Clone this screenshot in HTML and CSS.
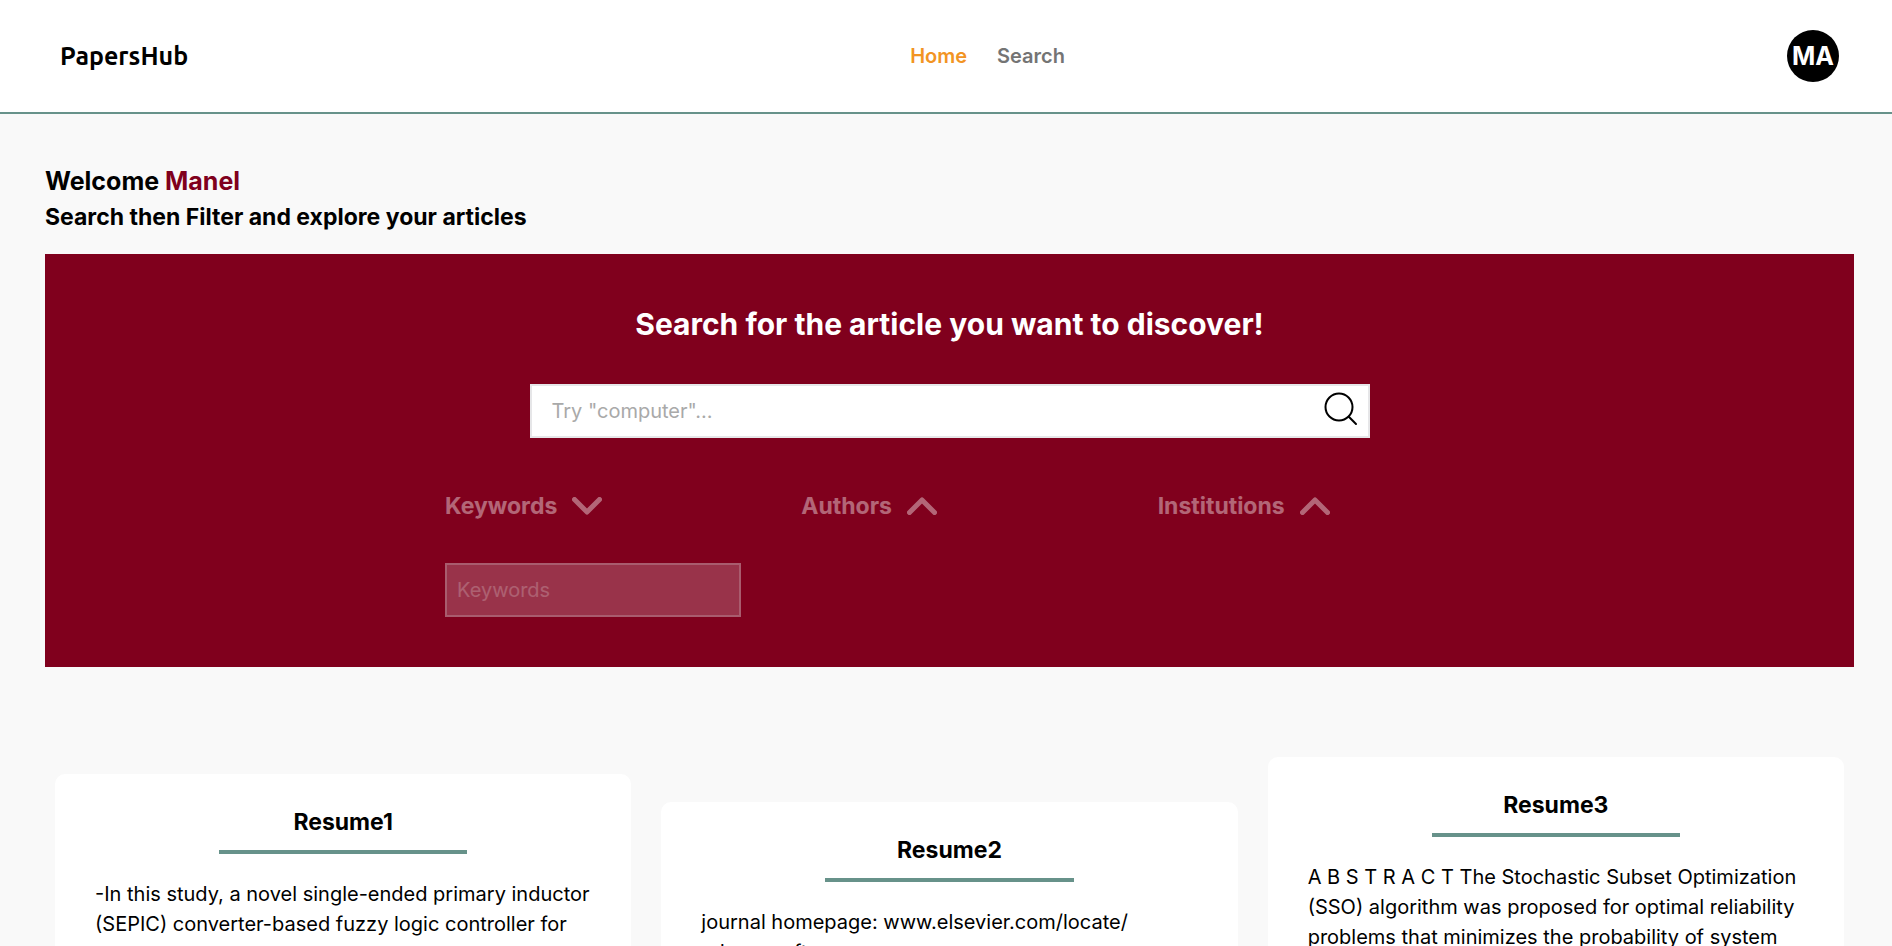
FILE: index.html
```html
<!DOCTYPE html>
<html lang="en">
<head>
  <meta charset="utf-8">
  <title>PapersHub</title>
  <link rel="stylesheet" href="styles.css">
</head>
<body>
  <header class="navbar">
    <a class="logo" href="#">PapersHub</a>
    <nav class="nav-links">
      <a class="active" href="#">Home</a>
      <a href="#search">Search</a>
    </nav>
    <button class="avatar" type="button">MA</button>
  </header>

  <main class="page">
    <h1 class="welcome">Welcome <span>Manel</span></h1>
    <h2 class="subtitle">Search then Filter and explore your articles</h2>

    <form class="search-box" id="search">
      <h2 class="search-title">Search for the article you want to discover!</h2>

      <div class="search-bar">
        <input type="text" aria-label="Search articles" placeholder='Try "computer"...'>
        <button type="submit" aria-label="Search">
          <svg width="34" height="34" viewBox="0 0 34 34" fill="none" stroke="#000" stroke-width="2" stroke-linecap="round">
            <circle cx="15" cy="15" r="13.5"/>
            <path d="M24.8 24.8L32 32"/>
          </svg>
        </button>
      </div>

      <div class="filters">
        <div class="filter">
          <button class="filter-toggle" type="button">
            Keywords
            <svg width="30" height="18" viewBox="0 0 30 18" fill="none" stroke="currentColor" stroke-width="5" stroke-linecap="round" stroke-linejoin="round">
              <path d="M2.5 2.5L15 15L27.5 2.5"/>
            </svg>
          </button>
          <input class="filter-input" type="text" aria-label="Keywords" placeholder="Keywords">
        </div>
        <div class="filter">
          <button class="filter-toggle" type="button">
            Authors
            <svg width="30" height="18" viewBox="0 0 30 18" fill="none" stroke="currentColor" stroke-width="5" stroke-linecap="round" stroke-linejoin="round">
              <path d="M2.5 15.5L15 3L27.5 15.5"/>
            </svg>
          </button>
        </div>
        <div class="filter">
          <button class="filter-toggle" type="button">
            Institutions
            <svg width="30" height="18" viewBox="0 0 30 18" fill="none" stroke="currentColor" stroke-width="5" stroke-linecap="round" stroke-linejoin="round">
              <path d="M2.5 15.5L15 3L27.5 15.5"/>
            </svg>
          </button>
        </div>
      </div>
    </form>

    <section class="cards">
      <article class="card card-first">
        <h3>Resume1</h3>
        <p>-In this study, a novel single-ended primary inductor (SEPIC) converter-based fuzzy logic controller for</p>
      </article>
      <article class="card card-second">
        <h3>Resume2</h3>
        <p>journal homepage: www.elsevier.com/locate/ advengsoft</p>
      </article>
      <article class="card">
        <h3>Resume3</h3>
        <p>A B S T R A C T The Stochastic Subset Optimization (SSO) algorithm was proposed for optimal reliability problems that minimizes the probability of system</p>
      </article>
    </section>
  </main>
</body>
</html>
```

FILE: styles.css
```css
* {
  box-sizing: border-box;
}

body {
  margin: 0;
  font-family: Inter, sans-serif;
  font-size: 20px;
  line-height: 30px;
  color: #000;
  background-color: #f9f9f9;
}

h1, h2, h3, p {
  margin: 0;
}

a {
  text-decoration: none;
}

button, input {
  font-family: inherit;
  font-size: 20px;
}

button {
  padding: 0;
  border: none;
  background: none;
  cursor: pointer;
}

/* navbar */
.navbar {
  display: flex;
  justify-content: space-between;
  align-items: center;
  padding: 30px 53px 30px 60px;
  background-color: #fff;
  border-bottom: 2px solid #67928a;
}

.logo {
  font-family: Ubuntu, "Noto Sans", sans-serif;
  font-size: 25px;
  font-weight: bold;
  color: #000;
}

.nav-links {
  display: flex;
  gap: 30px;
  font-weight: 600;
}

.nav-links a {
  color: #747474;
}

.nav-links .active {
  color: #f29423;
}

.avatar {
  width: 52px;
  height: 52px;
  border-radius: 50%;
  background-color: #000;
  color: #fff;
  font-size: 25px;
  font-weight: bold;
}

/* page */
.page {
  padding: 49px 38px 0 45px;
}

.welcome {
  font-size: 25px;
  line-height: 36px;
  font-weight: bold;
}

.welcome span {
  color: #80001d;
}

.subtitle {
  margin-bottom: 19px;
  font-size: 23px;
  line-height: 36px;
  font-weight: bold;
}

/* search */
.search-box {
  display: flex;
  flex-direction: column;
  align-items: center;
  padding: 50px 0;
  background-color: #80001d;
}

.search-title {
  margin-bottom: 40px;
  font-size: 30px;
  line-height: 40px;
  font-weight: bold;
  color: #fff;
}

.search-bar {
  display: flex;
  align-items: center;
  width: 840px;
  max-width: 90%;
  height: 54px;
  padding: 0 10px 0 20px;
  background-color: #fff;
  border: 2px solid #e6e6e8;
}

.search-bar input {
  flex: 1;
  min-width: 0;
  padding: 0;
  border: none;
  outline: none;
}

.search-bar button {
  display: flex;
  padding-bottom: 4px;
}

.search-bar input::placeholder {
  color: #a9a9a9;
}

.filters {
  display: grid;
  grid-template-columns: repeat(3, 1fr);
  align-items: start;
  gap: 60px;
  width: 1009px;
  max-width: 90%;
  margin-top: 50px;
  opacity: 0.4;
}

.filter-toggle {
  display: flex;
  align-items: center;
  gap: 15px;
  font-size: 23px;
  line-height: 36px;
  font-weight: bold;
  color: #fff;
}

.filter-input {
  width: 100%;
  height: 54px;
  margin-top: 39px;
  padding: 0 10px;
  background-color: rgba(255, 255, 255, 0.5);
  border: 2px solid #e6e6e8;
}

.filter-input::placeholder {
  color: #f0f0f0;
}

/* cards */
.cards {
  display: grid;
  grid-template-columns: repeat(3, 1fr);
  align-items: start;
  gap: 30px;
  padding: 90px 10px 0 10px;
}

.card {
  padding: 30px 40px;
  background-color: #fff;
  border-radius: 10px;
}

.card-first {
  margin-top: 17px;
}

.card-second {
  margin-top: 45px;
}

.card h3 {
  font-size: 23px;
  line-height: 36px;
  font-weight: bold;
  text-align: center;
}

.card h3::after {
  content: "";
  display: block;
  width: 50%;
  height: 4px;
  margin: 10px auto 25px;
  background-color: #67928a;
}
```
